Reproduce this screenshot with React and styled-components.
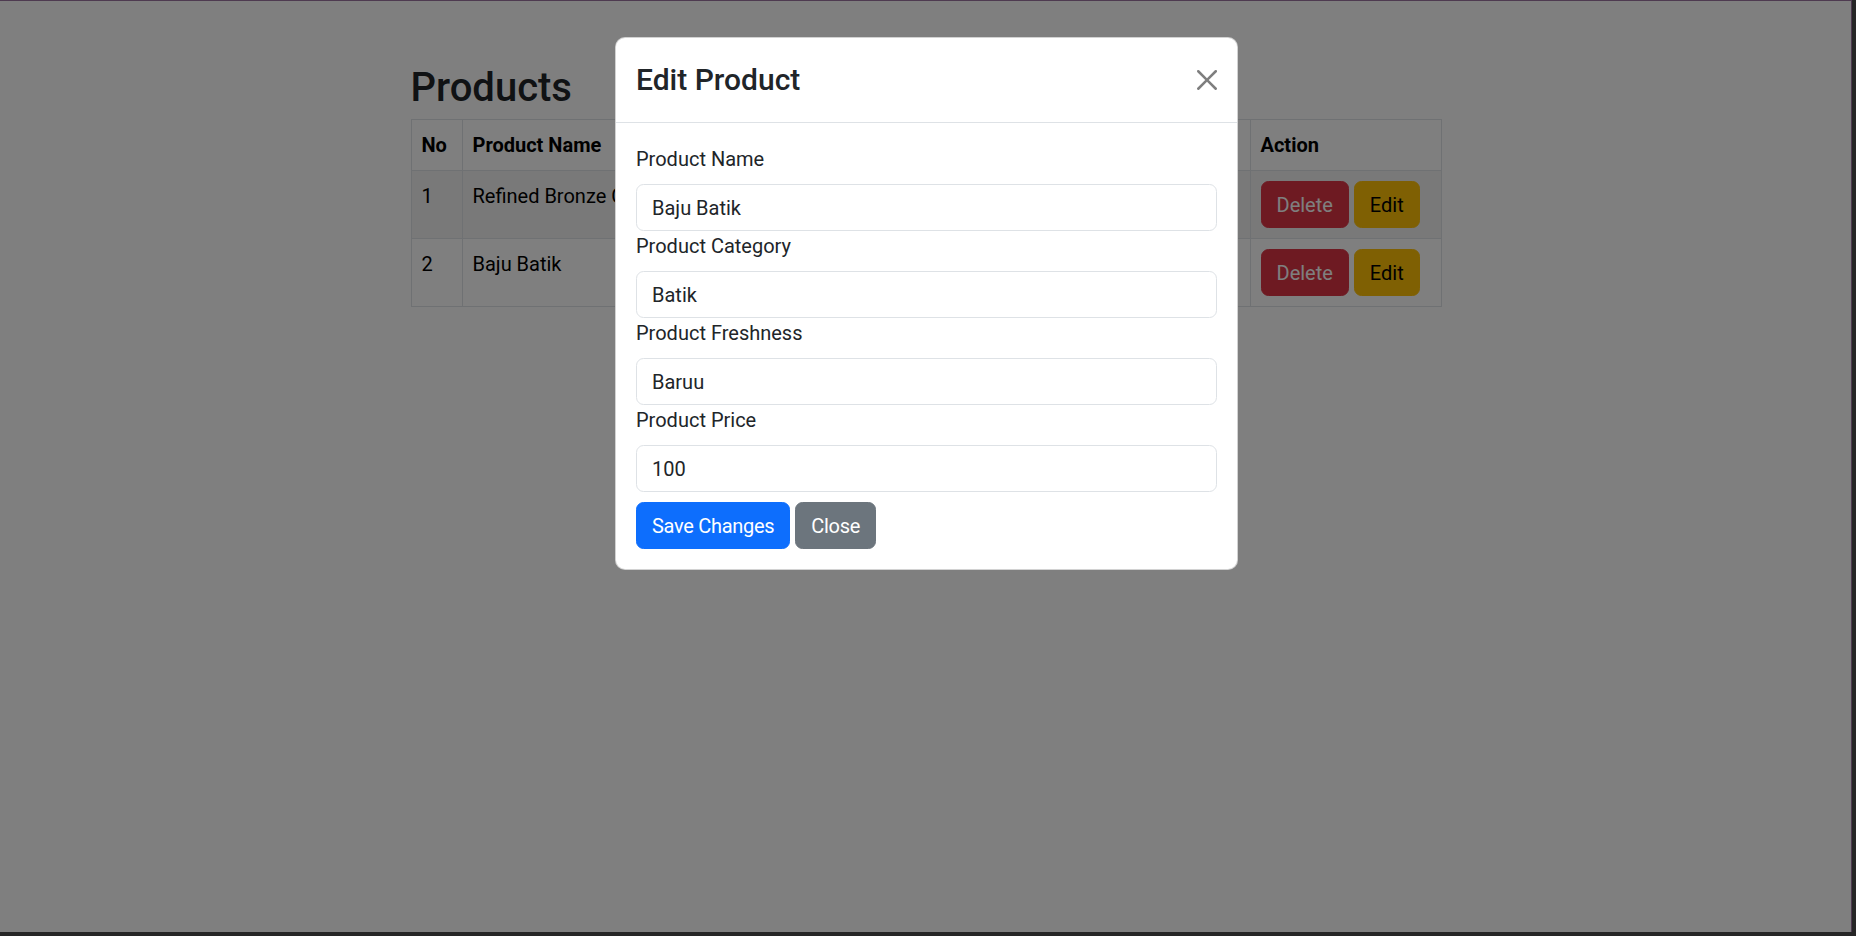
import styled, { createGlobalStyle } from 'styled-components'

const GlobalStyle = createGlobalStyle`
  * {
    box-sizing: border-box;
  }
  html, body {
    margin: 0;
    padding: 0;
    background: #262626;
  }
  body {
    font-family: Roboto, "Noto Sans", "Liberation Sans", sans-serif;
    font-size: 20px;
    line-height: 1.5;
    color: #212529;
  }
`

const s = {
  Viewport: styled.div`
    position: relative;
    width: 1852px;
    height: 932px;
    overflow: hidden;
    background: #fff;
    border-top: 1px solid #4e3a50;
    border-right: 1px solid #4e3a50;
  `,
  Container: styled.main`
    width: 1032px;
    margin: 0 auto;
    padding: 63px 0 0 1px;
  `,
  PageTitle: styled.h2`
    margin: 0 0 7px;
    font-size: 40px;
    font-weight: 500;
    line-height: 1.2;
    color: #212529;
  `,
  Table: styled.table`
    width: 100%;
    border-collapse: collapse;
    table-layout: fixed;
    vertical-align: top;
    color: #000;
  `,
  Th: styled.th`
    width: ${(p) => (p.$w ? `${p.$w}px` : 'auto')};
    padding: 10px;
    border: 1px solid #dee2e6;
    text-align: left;
    font-weight: 700;
    white-space: nowrap;
    overflow: hidden;
  `,
  Row: styled.tr`
    background: ${(p) => (p.$striped ? '#f2f2f2' : '#fff')};
  `,
  Td: styled.td`
    padding: 10px;
    border: 1px solid #dee2e6;
    vertical-align: top;
    white-space: nowrap;
    overflow: hidden;
  `,
  Actions: styled.div`
    display: flex;
    gap: 5px;
  `,
  Button: styled.button`
    font-family: inherit;
    font-size: 20px;
    line-height: 30px;
    padding: 7.5px 15px;
    border-radius: 7.5px;
    border: 1px solid ${(p) => p.$bg};
    background: ${(p) => p.$bg};
    color: ${(p) => p.$fg || '#fff'};
    letter-spacing: ${(p) => (p.$tight ? '-0.3px' : 'normal')};
    cursor: pointer;
  `,
  Backdrop: styled.div`
    position: absolute;
    inset: 0;
    background: rgba(0, 0, 0, 0.5);
    display: flex;
    justify-content: center;
    align-items: flex-start;
    padding: 36px 0 0 2px;
  `,
  Modal: styled.div`
    width: 623px;
    background: #fff;
    border: 1px solid rgba(0, 0, 0, 0.175);
    border-radius: 10px;
  `,
  ModalHeader: styled.div`
    display: flex;
    align-items: center;
    justify-content: space-between;
    padding: 20px;
    border-bottom: 1px solid #dee2e6;
  `,
  ModalTitle: styled.h4`
    margin: 0;
    font-size: 30px;
    font-weight: 500;
    line-height: 44px;
    color: #212529;
  `,
  CloseButton: styled.button`
    width: 20px;
    height: 20px;
    padding: 0;
    border: 0;
    background: none;
    display: flex;
    cursor: pointer;
    opacity: 0.5;
  `,
  ModalBody: styled.form`
    padding: 21px 20px 20px;
  `,
  Label: styled.label`
    display: block;
    margin-bottom: 10px;
    line-height: 30px;
  `,
  Input: styled.input`
    display: block;
    width: 100%;
    font-family: inherit;
    font-size: 20px;
    line-height: 30px;
    padding: 7.5px 15px;
    color: #212529;
    background: #fff;
    border: 1px solid #dee2e6;
    border-radius: 7.5px;
    outline: none;
  `,
  Footer: styled.div`
    display: flex;
    gap: 5px;
    margin-top: 10px;
  `,
}

const products = [
  { id: 1, name: 'Refined Bronze Chair', category: 'Furniture', freshness: 'Brand New', price: '250' },
  { id: 2, name: 'Baju Batik', category: 'Batik', freshness: 'Baruu', price: '100' },
]

const fields = [
  { label: 'Product Name', value: 'Baju Batik' },
  { label: 'Product Category', value: 'Batik' },
  { label: 'Product Freshness', value: 'Baruu' },
  { label: 'Product Price', value: '100' },
]

const CloseIcon = () => (
  <svg width="20" height="20" viewBox="0 0 16 16" fill="#000">
    <path d="M.293.293a1 1 0 0 1 1.414 0L8 6.586 14.293.293a1 1 0 1 1 1.414 1.414L9.414 8l6.293 6.293a1 1 0 0 1-1.414 1.414L8 9.414l-6.293 6.293a1 1 0 0 1-1.414-1.414L6.586 8 .293 1.707a1 1 0 0 1 0-1.414z" />
  </svg>
)

const App = () => {
  return (
    <>
      <GlobalStyle />
      <s.Viewport>
        <s.Container>
          <s.PageTitle>Products</s.PageTitle>
          <s.Table>
            <thead>
              <tr>
                <s.Th $w={51}>No</s.Th>
                <s.Th>Product Name</s.Th>
                <s.Th>Product Category</s.Th>
                <s.Th>Product Freshness</s.Th>
                <s.Th>Product Price</s.Th>
                <s.Th $w={191}>Action</s.Th>
              </tr>
            </thead>
            <tbody>
              {products.map((p, i) => (
                <s.Row key={p.id} $striped={i % 2 === 0}>
                  <s.Td>{p.id}</s.Td>
                  <s.Td>{p.name}</s.Td>
                  <s.Td>{p.category}</s.Td>
                  <s.Td>{p.freshness}</s.Td>
                  <s.Td>{p.price}</s.Td>
                  <s.Td>
                    <s.Actions>
                      <s.Button $bg="#dc3545">Delete</s.Button>
                      <s.Button $bg="#ffc107" $fg="#000">Edit</s.Button>
                    </s.Actions>
                  </s.Td>
                </s.Row>
              ))}
            </tbody>
          </s.Table>
        </s.Container>

        <s.Backdrop>
          <s.Modal>
            <s.ModalHeader>
              <s.ModalTitle>Edit Product</s.ModalTitle>
              <s.CloseButton type="button" aria-label="Close">
                <CloseIcon />
              </s.CloseButton>
            </s.ModalHeader>
            <s.ModalBody onSubmit={(e) => e.preventDefault()}>
              {fields.map((f) => (
                <div key={f.label}>
                  <s.Label>{f.label}</s.Label>
                  <s.Input defaultValue={f.value} />
                </div>
              ))}
              <s.Footer>
                <s.Button type="submit" $bg="#0d6efd" $tight>Save Changes</s.Button>
                <s.Button type="button" $bg="#6c757d" $tight>Close</s.Button>
              </s.Footer>
            </s.ModalBody>
          </s.Modal>
        </s.Backdrop>
      </s.Viewport>
    </>
  )
}

export default App
